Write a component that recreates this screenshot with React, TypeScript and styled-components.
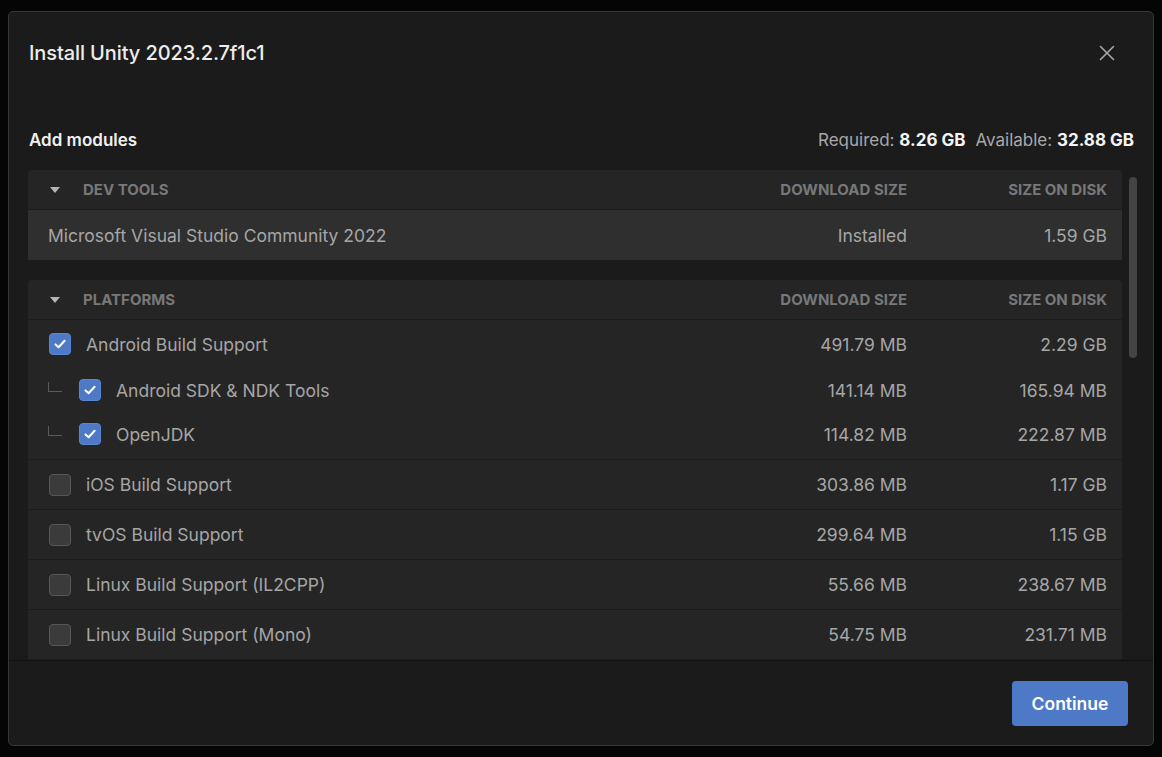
import styled, { createGlobalStyle } from "styled-components";

const GlobalStyle = createGlobalStyle`
	html, body {
		margin: 0;
		padding: 0;
		background: #050505;
		font-family: Inter, "Noto Sans", "Liberation Sans", sans-serif;
	}
`;

type Module = {
	name: string;
	download: string;
	disk: string;
	checked?: boolean;
	children?: Module[];
};

const platforms: Module[] = [
	{
		name: "Android Build Support",
		download: "491.79 MB",
		disk: "2.29 GB",
		checked: true,
		children: [
			{ name: "Android SDK & NDK Tools", download: "141.14 MB", disk: "165.94 MB", checked: true },
			{ name: "OpenJDK", download: "114.82 MB", disk: "222.87 MB", checked: true },
		],
	},
	{ name: "iOS Build Support", download: "303.86 MB", disk: "1.17 GB" },
	{ name: "tvOS Build Support", download: "299.64 MB", disk: "1.15 GB" },
	{ name: "Linux Build Support (IL2CPP)", download: "55.66 MB", disk: "238.67 MB" },
	{ name: "Linux Build Support (Mono)", download: "54.75 MB", disk: "231.71 MB" },
	{ name: "Linux Dedicated Server Build Support", download: "106.04 MB", disk: "470.88 MB" },
	{ name: "Mac Build Support (Mono)", download: "489.77 MB", disk: "1.96 GB" },
	{ name: "Universal Windows Platform Build Support", download: "279.64 MB", disk: "2.15 GB" },
	{ name: "visionOS Build Support", download: "340.12 MB", disk: "1.38 GB" },
	{ name: "WebGL Build Support", download: "498.35 MB", disk: "2.01 GB" },
	{ name: "Windows Build Support (IL2CPP)", download: "427.23 MB", disk: "2.04 GB" },
	{ name: "Windows Dedicated Server Build Support", download: "434.75 MB", disk: "2.09 GB" },
];

const languages: Module[] = [
	{ name: "日本語", download: "1.12 MB", disk: "1.12 MB" },
	{ name: "한국어", download: "1.05 MB", disk: "1.05 MB" },
	{ name: "简体中文", download: "1.17 MB", disk: "1.17 MB" },
	{ name: "繁體中文", download: "1.12 MB", disk: "1.12 MB" },
];

const Page = styled.div`
	height: 757px;
	box-sizing: border-box;
	padding: 11px 8px;
	display: flex;
`;

const Modal = styled.div`
	flex: 1;
	display: flex;
	flex-direction: column;
	background: #1b1b1b;
	border: 1px solid #363636;
	border-radius: 5px;
	overflow: hidden;
`;

const Header = styled.div`
	height: 82px;
	flex-shrink: 0;
	display: flex;
	align-items: center;
	justify-content: space-between;
	padding: 0 31px 0 20px;
`;

const Title = styled.h1`
	margin: 0;
	font-size: 20px;
	font-weight: 500;
	color: #ededed;
	letter-spacing: -0.1px;
`;

const CloseButton = styled.button`
	width: 30px;
	height: 30px;
	display: flex;
	align-items: center;
	justify-content: center;
	background: none;
	border: none;
	padding: 0;
	color: #a8a8a8;
	cursor: pointer;
`;

const ModulesBar = styled.div`
	flex-shrink: 0;
	display: flex;
	align-items: center;
	justify-content: space-between;
	height: 22px;
	padding: 35px 19px 19px 20px;
`;

const SubTitle = styled.h2`
	margin: 0;
	font-size: 17px;
	font-weight: 600;
	color: #f0f0f0;
`;

const Space = styled.div`
	font-size: 17px;
	color: #a8a8a8;
	display: flex;
	gap: 10px;

	b {
		color: #f4f4f4;
		font-weight: 700;
	}
`;

const Body = styled.div`
	flex: 1;
	min-height: 0;
	display: flex;
	margin: 0 11px 0 19px;
`;

const List = styled.div`
	flex: 1;
	min-width: 0;
	overflow-y: auto;
	scrollbar-width: none;
	display: flex;
	flex-direction: column;
	gap: 20px;

	&::-webkit-scrollbar {
		display: none;
	}
`;

const ScrollTrack = styled.div`
	width: 20px;
	flex-shrink: 0;
	padding: 7px 5px 0 7px;
	box-sizing: border-box;
`;

const ScrollThumb = styled.div`
	height: 181px;
	border-radius: 4px;
	background: #444444;
`;

const Section = styled.div`
	flex-shrink: 0;
	background: #252525;
	border-radius: 4px 4px 0 0;
`;

const Grid = styled.div`
	display: grid;
	grid-template-columns: 1fr 200px 200px;
	align-items: center;
	padding: 0 15px 0 20px;
`;

const HeaderRow = styled(Grid)`
	height: 39px;
	border-bottom: 1px solid #1c1c1c;
	font-size: 15px;
	font-weight: 700;
	color: #787878;
	text-transform: uppercase;
`;

const HeaderName = styled.div`
	display: flex;
	align-items: center;
	gap: 23px;
`;

const Caret = styled.span`
	width: 0;
	height: 0;
	margin-left: 2px;
	border-left: 5.5px solid transparent;
	border-right: 5.5px solid transparent;
	border-top: 6px solid #b5b5b5;
`;

const Row = styled(Grid)<{ $installed?: boolean; $height: number; $divider?: boolean }>`
	height: ${(p) => p.$height}px;
	background: ${(p) => (p.$installed ? "#2f2f2f" : "transparent")};
	border-bottom: ${(p) => (p.$divider ? "1px solid #1c1c1c" : "none")};
	font-size: 17.5px;
	color: #a6a6a6;
`;

const Group = styled.div`
	padding-bottom: 3px;
	border-bottom: 1px solid #1c1c1c;
`;

const Name = styled.div`
	display: flex;
	align-items: center;
	gap: 15px;
	white-space: nowrap;
`;

const Right = styled.div`
	text-align: right;
	white-space: nowrap;
`;

const Tree = styled.span`
	width: 14px;
	height: 10px;
	margin: -6px 1px 0 0;
	border-left: 1px solid #5a5a5a;
	border-bottom: 1px solid #5a5a5a;
	box-sizing: border-box;
`;

const Checkbox = styled.span<{ $checked?: boolean }>`
	width: 22px;
	height: 22px;
	box-sizing: border-box;
	flex-shrink: 0;
	display: flex;
	align-items: center;
	justify-content: center;
	border-radius: 4px;
	margin-left: 1px;
	background: ${(p) => (p.$checked ? "#4d79c7" : "#3b3b3b")};
	border: 1px solid ${(p) => (p.$checked ? "#5a85d0" : "#575757")};
`;

const Footer = styled.div`
	height: 84px;
	flex-shrink: 0;
	border-top: 1px solid #111111;
	display: flex;
	align-items: center;
	justify-content: flex-end;
	padding-right: 25px;
`;

const ContinueButton = styled.button`
	width: 116px;
	height: 45px;
	border: none;
	border-radius: 4px;
	background: #4d79c7;
	color: #ffffff;
	font-family: inherit;
	font-size: 17.5px;
	font-weight: 600;
	cursor: pointer;
`;

const Check = () => (
	<svg width="14" height="14" viewBox="0 0 14 14" fill="none">
		<path d="M2.5 7.4 L5.6 10.3 L11.6 3.8" stroke="#ffffff" strokeWidth="2" strokeLinecap="round" strokeLinejoin="round" />
	</svg>
);

const SectionHead = ({ title }: { title: string }) => (
	<HeaderRow>
		<HeaderName>
			<Caret />
			{title}
		</HeaderName>
		<Right>Download size</Right>
		<Right>Size on disk</Right>
	</HeaderRow>
);

const ModuleRow = ({ m }: { m: Module }) => {
	if (m.children) {
		return (
			<Group>
				<Row $height={48}>
					<Name>
						<Checkbox $checked={m.checked}>{m.checked && <Check />}</Checkbox>
						{m.name}
					</Name>
					<Right>{m.download}</Right>
					<Right>{m.disk}</Right>
				</Row>
				{m.children.map((c) => (
					<Row key={c.name} $height={44}>
						<Name>
							<Tree />
							<Checkbox $checked={c.checked}>{c.checked && <Check />}</Checkbox>
							{c.name}
						</Name>
						<Right>{c.download}</Right>
						<Right>{c.disk}</Right>
					</Row>
				))}
			</Group>
		);
	}
	return (
		<Row $height={49} $divider>
			<Name>
				<Checkbox $checked={m.checked}>{m.checked && <Check />}</Checkbox>
				{m.name}
			</Name>
			<Right>{m.download}</Right>
			<Right>{m.disk}</Right>
		</Row>
	);
};

export default function App() {
	return (
		<>
			<GlobalStyle />
			<Page>
				<Modal>
					<Header>
						<Title>Install Unity 2023.2.7f1c1</Title>
						<CloseButton aria-label="Close">
							<svg width="16" height="16" viewBox="0 0 16 16">
								<path d="M1.5 1.5 L14.5 14.5 M14.5 1.5 L1.5 14.5" stroke="currentColor" strokeWidth="1.6" strokeLinecap="round" />
							</svg>
						</CloseButton>
					</Header>
					<ModulesBar>
						<SubTitle>Add modules</SubTitle>
						<Space>
							<span>
								Required: <b>8.26 GB</b>
							</span>
							<span>
								Available: <b>32.88 GB</b>
							</span>
						</Space>
					</ModulesBar>
					<Body>
						<List>
							<Section>
								<SectionHead title="Dev tools" />
								<Row $height={50} $installed>
									<Name>Microsoft Visual Studio Community 2022</Name>
									<Right>Installed</Right>
									<Right>1.59 GB</Right>
								</Row>
							</Section>
							<Section>
								<SectionHead title="Platforms" />
								{platforms.map((m) => (
									<ModuleRow key={m.name} m={m} />
								))}
							</Section>
							<Section>
								<SectionHead title="Documentation" />
								<ModuleRow m={{ name: "Documentation", download: "374.71 MB", disk: "1.08 GB" }} />
							</Section>
							<Section>
								<SectionHead title="Language packs (Preview)" />
								{languages.map((m) => (
									<ModuleRow key={m.name} m={m} />
								))}
							</Section>
						</List>
						<ScrollTrack>
							<ScrollThumb />
						</ScrollTrack>
					</Body>
					<Footer>
						<ContinueButton>Continue</ContinueButton>
					</Footer>
				</Modal>
			</Page>
		</>
	);
}
